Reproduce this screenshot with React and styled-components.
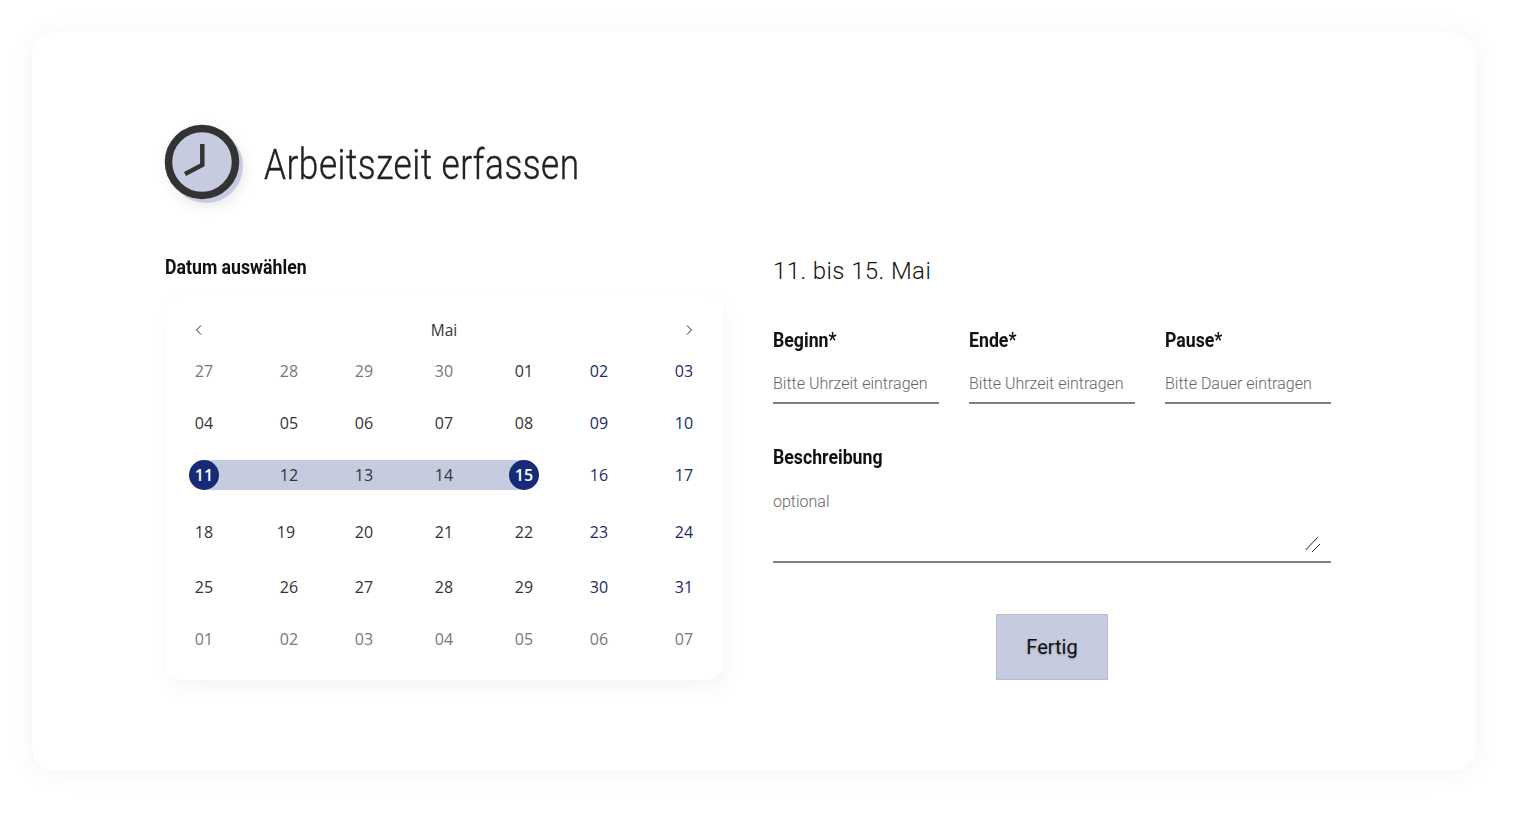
import styled, { createGlobalStyle } from 'styled-components'

const GlobalStyle = createGlobalStyle`
  html, body {
    margin: 0;
    padding: 0;
    background: #fff;
  }
  body {
    font-family: 'Roboto', sans-serif;
  }
`

const Page = styled.div`
  width: 1519px;
  height: 814px;
  box-sizing: border-box;
  padding: 32px 43px 43px 32px;
  overflow: hidden;
`

const Card = styled.main`
  height: 739px;
  box-sizing: border-box;
  padding: 93px 145px 0 133px;
  background: #fff;
  border-radius: 24px;
  box-shadow: 0 2px 28px rgba(0, 0, 0, 0.05);
`

const Header = styled.header`
  display: flex;
  align-items: center;
  gap: 19px;
  height: 74px;
`

const ClockIcon = styled.svg`
  width: 80px;
  height: 80px;
  flex: none;
  margin-bottom: -6px;
  overflow: visible;
  filter: drop-shadow(2px 4px 6px rgba(0, 0, 0, 0.08));
`

const Title = styled.h1`
  margin: 0;
  padding-top: 6px;
  font-family: 'Roboto', sans-serif;
  font-weight: 300;
  font-size: 42px;
  line-height: 48px;
  letter-spacing: 0.6px;
  color: #222;
  -webkit-text-stroke: 0.4px #222;
  white-space: nowrap;
  transform: scaleX(0.838);
  transform-origin: left center;
`

const Columns = styled.div`
  display: flex;
  gap: 50px;
  margin-top: 56px;
`

const LeftColumn = styled.section`
  width: 558px;
  flex: none;
`

const RightColumn = styled.section`
  width: 558px;
  flex: none;
`

const Label = styled.div`
  font-family: 'Roboto', sans-serif;
  font-weight: 700;
  font-size: 20px;
  line-height: 24px;
  color: #111;
  white-space: nowrap;
  transform: scaleX(0.885);
  transform-origin: left center;
`

const Calendar = styled.div`
  margin-top: 17px;
  height: 384px;
  box-sizing: border-box;
  padding: 21px 9px 0;
  background: #fff;
  border-radius: 16px;
  box-shadow: 4px 8px 20px rgba(0, 0, 0, 0.04);
`

const MonthBar = styled.div`
  display: flex;
  align-items: center;
  justify-content: space-between;
  height: 26px;
  padding: 0 20px;
  font-family: 'Open Sans', sans-serif;
  font-size: 15.500px;
  color: #333;
`

const DayGrid = styled.div`
  display: grid;
  grid-template-columns: 60px 110px 40px 120px 40px 110px 60px;
  grid-template-rows: 52px 52px 52px 62px 48px 56px;
  margin-top: 2px;
`

const rangeBackground = {
  start: 'linear-gradient(to right, transparent 50%, #c6cbdf 50%)',
  mid: 'linear-gradient(#c6cbdf, #c6cbdf)',
  end: 'linear-gradient(to right, #c6cbdf 50%, transparent 50%)'
}

const dayColor = {
  muted: '#777',
  normal: '#333',
  weekend: '#1c2a68'
}

const Day = styled.div`
  display: flex;
  align-items: center;
  justify-content: center;
  padding-right: ${p => (p.$nudge ? '6px' : '0')};
  font-family: 'Open Sans', sans-serif;
  font-size: 16px;
  color: ${p => dayColor[p.$tone]};
  background: ${p => (p.$range ? rangeBackground[p.$range] : 'none')} center / 100% 30px no-repeat;
`

const Selected = styled.span`
  display: flex;
  align-items: center;
  justify-content: center;
  width: 30px;
  height: 30px;
  border-radius: 50%;
  background: #162a78;
  color: #fff;
  font-weight: 600;
`

const Heading = styled.h2`
  margin: 0;
  padding-top: 1px;
  font-family: 'Roboto', sans-serif;
  font-weight: 300;
  font-size: 24px;
  line-height: 30px;
  letter-spacing: 0.4px;
  color: #111;
`

const FieldRow = styled.div`
  display: flex;
  gap: 30px;
  margin-top: 42px;
`

const Field = styled.div`
  width: ${p => p.$width}px;
`

const Input = styled.div`
  position: relative;
  box-sizing: border-box;
  height: ${p => p.$height}px;
  margin-top: 17px;
  padding-top: ${p => p.$top}px;
  border-bottom: 2px solid #808080;
  font-weight: 300;
  font-size: 16px;
  line-height: 20px;
  color: #666;
  white-space: nowrap;
`

const ResizeHandle = styled.svg`
  position: absolute;
  right: 9px;
  bottom: 9px;
  width: 18px;
  height: 18px;
  overflow: visible;
`

const DescriptionField = styled(Field)`
  margin-top: 41px;
`

const ButtonRow = styled.div`
  display: flex;
  justify-content: center;
  margin-top: 51px;
`

const Button = styled.button`
  width: 112px;
  height: 66px;
  padding: 0;
  background: #c6cbdf;
  border: 1px solid #b7bccf;
  font-family: 'Roboto', sans-serif;
  font-weight: 400;
  font-size: 20px;
  color: #111;
  text-shadow: 0 1px 2px rgba(0, 0, 0, 0.25);
`

const Chevron = ({ d }) => (
  <svg width="10" height="12" viewBox="0 0 10 12" fill="none" stroke="#222" strokeWidth="1">
    <path d={d} />
  </svg>
)

const weeks = [
  [['27', 'muted'], ['28', 'muted'], ['29', 'muted'], ['30', 'muted'], ['01', 'normal'], ['02', 'weekend'], ['03', 'weekend']],
  [['04', 'normal'], ['05', 'normal'], ['06', 'normal'], ['07', 'normal'], ['08', 'normal'], ['09', 'weekend'], ['10', 'weekend']],
  [['11', 'normal', 'start'], ['12', 'normal', 'mid'], ['13', 'normal', 'mid'], ['14', 'normal', 'mid'], ['15', 'normal', 'end'], ['16', 'weekend'], ['17', 'weekend']],
  [['18', 'normal'], ['19', 'normal'], ['20', 'normal'], ['21', 'normal'], ['22', 'normal'], ['23', 'weekend'], ['24', 'weekend']],
  [['25', 'normal'], ['26', 'normal'], ['27', 'normal'], ['28', 'normal'], ['29', 'normal'], ['30', 'weekend'], ['31', 'weekend']],
  [['01', 'muted'], ['02', 'muted'], ['03', 'muted'], ['04', 'muted'], ['05', 'muted'], ['06', 'muted'], ['07', 'muted']]
]

function App() {
  return (
    <Page>
      <GlobalStyle />
      <Card>
        <Header>
          <ClockIcon viewBox="0 0 80 80">
            <circle cx="41" cy="41" r="37" fill="#c6cbdf" />
            <circle cx="37" cy="37" r="33.5" fill="#c6cbdf" stroke="#333" strokeWidth="7.5" />
            <path d="M37.300 19 V 40 L 20 49" fill="none" stroke="#333" strokeWidth="4.5" />
          </ClockIcon>
          <Title>Arbeitszeit erfassen</Title>
        </Header>

        <Columns>
          <LeftColumn>
            <Label>Datum auswählen</Label>
            <Calendar>
              <MonthBar>
                <Chevron d="M7 1.500 L2.500 6 L7 10.500" />
                <span>Mai</span>
                <Chevron d="M3 1.500 L7.500 6 L3 10.500" />
              </MonthBar>
              <DayGrid>
                {weeks.flat().map(([day, tone, range], i) => (
                  <Day key={i} $tone={tone} $range={range} $nudge={day === '19'}>
                    {range === 'start' || range === 'end' ? <Selected>{day}</Selected> : day}
                  </Day>
                ))}
              </DayGrid>
            </Calendar>
          </LeftColumn>

          <RightColumn>
            <Heading>11. bis 15. Mai</Heading>
            <FieldRow>
              <Field $width={166}>
                <Label>Beginn*</Label>
                <Input $height={35} $top={5}>Bitte Uhrzeit eintragen</Input>
              </Field>
              <Field $width={166}>
                <Label>Ende*</Label>
                <Input $height={35} $top={5}>Bitte Uhrzeit eintragen</Input>
              </Field>
              <Field $width={166}>
                <Label>Pause*</Label>
                <Input $height={35} $top={5}>Bitte Dauer eintragen</Input>
              </Field>
            </FieldRow>
            <DescriptionField $width={558}>
              <Label>Beschreibung</Label>
              <Input $height={77} $top={6}>
                optional
                <ResizeHandle viewBox="0 0 18 18" fill="none" stroke="#222" strokeWidth="1">
                  <path d="M1.700 16 L13.700 3.300 M8 18 L16 10" />
                </ResizeHandle>
              </Input>
            </DescriptionField>
            <ButtonRow>
              <Button>Fertig</Button>
            </ButtonRow>
          </RightColumn>
        </Columns>
      </Card>
    </Page>
  )
}

export default App
